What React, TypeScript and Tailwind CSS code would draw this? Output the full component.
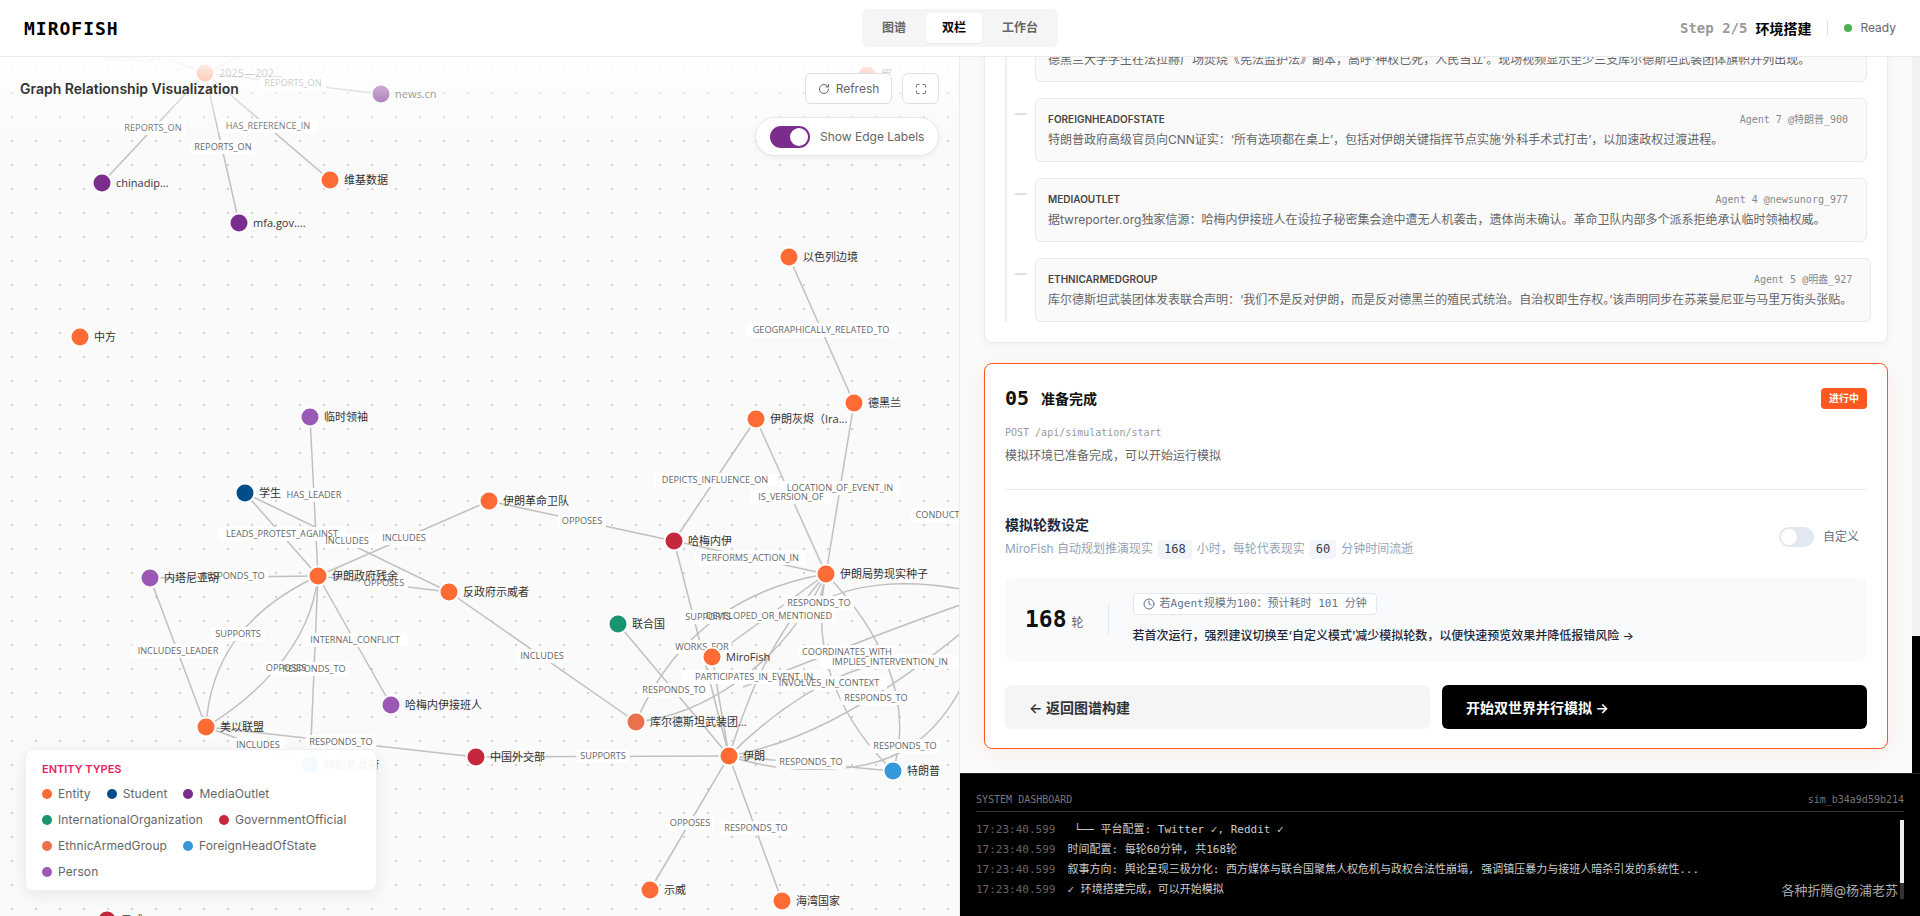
import { Clock, Maximize, RotateCw } from "lucide-react";

const mono = "font-['DejaVu_Sans_Mono','Noto_Sans_CJK_SC',monospace]";
const sans = "font-['Inter','Noto_Sans_CJK_SC',sans-serif]";
const graphFont = "font-['Open_Sans','Noto_Sans_CJK_SC',sans-serif]";

const colors = {
  entity: "#FF6B35",
  student: "#004E89",
  media: "#7B2D8E",
  org: "#1A936F",
  gov: "#C5283D",
  armed: "#E9724C",
  foreign: "#3498DB",
  person: "#9B59B6",
};

const nodes: [number, number, string, string][] = [
  [205, 73, "2025—202...", colors.entity],
  [381, 94, "news.cn", colors.media],
  [867, 75, "罗", colors.entity],
  [102, 183, "chinadip...", colors.media],
  [330, 180, "维基数据", colors.entity],
  [239, 223, "mfa.gov....", colors.media],
  [789, 257, "以色列边境", colors.entity],
  [80, 337, "中方", colors.entity],
  [854, 403, "德黑兰", colors.entity],
  [756, 419, "伊朗灰烬（Ira...", colors.entity],
  [310, 417, "临时领袖", colors.person],
  [245, 493, "学生", colors.student],
  [489, 501, "伊朗革命卫队", colors.entity],
  [674, 541, "哈梅内伊", colors.gov],
  [318, 576, "伊朗政府残余", colors.entity],
  [150, 578, "内塔尼亚胡", colors.person],
  [449, 592, "反政府示威者", colors.entity],
  [826, 574, "伊朗局势现实种子", colors.entity],
  [618, 624, "联合国", colors.org],
  [712, 657, "MiroFish", colors.entity],
  [391, 705, "哈梅内伊接班人", colors.person],
  [636, 722, "库尔德斯坦武装团...", colors.armed],
  [206, 727, "美以联盟", colors.entity],
  [476, 757, "中国外交部", colors.gov],
  [729, 756, "伊朗", colors.entity],
  [893, 771, "特朗普", colors.foreign],
  [310, 765, "特朗普政府", colors.foreign],
  [650, 890, "示威", colors.entity],
  [782, 901, "海湾国家", colors.entity],
  [107, 920, "示威", colors.gov],
];

// straight links and the bent ones between the same nodes
const links = [
  "M205 73L160 56",
  "M205 73L240 56",
  "M205 73L102 183",
  "M205 73L239 223",
  "M205 73L330 180",
  "M205 73L381 94",
  "M789 257L854 403",
  "M756 419L674 541",
  "M756 419L826 574",
  "M854 403L826 574",
  "M310 417L318 576",
  "M245 493L318 576",
  "M245 493L449 592",
  "M489 501L318 576",
  "M489 501L674 541",
  "M674 541L826 574",
  "M150 578L318 576",
  "M318 576L449 592",
  "M150 578L206 727",
  "M206 727C210 660 245 610 318 576",
  "M206 727C250 700 310 650 318 576",
  "M318 576L310 765",
  "M318 576L391 705",
  "M206 727L476 757",
  "M206 727L310 765",
  "M476 757L729 756",
  "M449 592L636 722",
  "M618 624L729 756",
  "M674 541L729 756",
  "M712 657L729 756",
  "M712 657L826 574",
  "M826 574C760 585 680 620 636 722",
  "M636 722C700 715 780 670 826 574",
  "M729 756C750 690 770 640 826 574",
  "M826 574C812 640 830 710 893 771",
  "M826 574C880 630 915 700 893 771",
  "M826 574L819 603",
  "M819 603C850 585 900 578 960 589",
  "M743 687C790 670 860 640 960 605",
  "M729 756C770 715 830 670 890 662",
  "M729 756C790 745 860 715 960 634",
  "M729 756C770 770 810 772 853 767",
  "M853 767C890 762 930 745 960 690",
  "M729 756L893 771",
  "M729 756L650 890",
  "M729 756L782 901",
];

const edgeLabels: [string, number, number][] = [
  ["REPORTS_ON", 132, 58],
  ["REPORTS_ON", 293, 83],
  ["REPORTS_ON", 153, 128],
  ["HAS_REFERENCE_IN", 268, 126],
  ["REPORTS_ON", 223, 147],
  ["GEOGRAPHICALLY_RELATED_TO", 821, 330],
  ["DEPICTS_INFLUENCE_ON", 715, 480],
  ["LOCATION_OF_EVENT_IN", 840, 488],
  ["IS_VERSION_OF", 791, 497],
  ["CONDUCTED_STRIKE_ON", 969, 515],
  ["HAS_LEADER", 314, 495],
  ["LEADS_PROTEST_AGAINST", 282, 534],
  ["INCLUDES", 347, 541],
  ["INCLUDES", 404, 538],
  ["OPPOSES", 582, 521],
  ["PERFORMS_ACTION_IN", 750, 558],
  ["RESPONDS_TO", 233, 576],
  ["OPPOSES", 384, 583],
  ["RESPONDS_TO", 819, 603],
  ["SUPPORTS", 708, 617],
  ["DEVELOPED_OR_MENTIONED", 769, 616],
  ["SUPPORTS", 238, 634],
  ["INTERNAL_CONFLICT", 355, 640],
  ["WORKS_FOR", 702, 647],
  ["INCLUDES_LEADER", 178, 651],
  ["COORDINATES_WITH", 847, 652],
  ["IMPLIES_INTERVENTION_IN", 890, 662],
  ["INCLUDES", 542, 656],
  ["OPPOSES", 286, 668],
  ["RESPONDS_TO", 314, 669],
  ["PARTICIPATES_IN_EVENT_IN", 754, 677],
  ["INVOLVES_IN_CONTEXT", 829, 683],
  ["RESPONDS_TO", 674, 690],
  ["RESPONDS_TO", 876, 698],
  ["RESPONDS_TO", 341, 742],
  ["INCLUDES", 258, 745],
  ["RESPONDS_TO", 905, 746],
  ["SUPPORTS", 603, 756],
  ["RESPONDS_TO", 811, 762],
  ["OPPOSES", 690, 823],
  ["RESPONDS_TO", 756, 828],
];

const legend = [
  ["Entity", colors.entity],
  ["Student", colors.student],
  ["MediaOutlet", colors.media],
  ["InternationalOrganization", colors.org],
  ["GovernmentOfficial", colors.gov],
  ["EthnicArmedGroup", colors.armed],
  ["ForeignHeadOfState", colors.foreign],
  ["Person", colors.person],
];

const entries = [
  {
    type: "STUDENT",
    agent: "Agent 2 @学生_412",
    text: "德黑兰大学学生在法拉赫广场焚烧《宪法监护法》副本，高呼‘神权已死，人民当立’。现场视频显示至少三支库尔德斯坦武装团体旗帜并列出现。",
  },
  {
    type: "FOREIGNHEADOFSTATE",
    agent: "Agent 7 @特朗普_900",
    text: "特朗普政府高级官员向CNN证实：‘所有选项都在桌上’，包括对伊朗关键指挥节点实施‘外科手术式打击’，以加速政权过渡进程。",
  },
  {
    type: "MEDIAOUTLET",
    agent: "Agent 4 @newsunorg_977",
    text: "据twreporter.org独家信源：哈梅内伊接班人在设拉子秘密集会途中遭无人机袭击，遗体尚未确认。革命卫队内部多个派系拒绝承认临时领袖权威。",
  },
  {
    type: "ETHNICARMEDGROUP",
    agent: "Agent 5 @明盎_927",
    text: "库尔德斯坦武装团体发表联合声明：‘我们不是反对伊朗，而是反对德黑兰的殖民式统治。自治权即生存权。’该声明同步在苏莱曼尼亚与马里万街头张贴。",
  },
];

const logs = [
  "\u00a0└── 平台配置: Twitter ✓, Reddit ✓",
  "时间配置: 每轮60分钟, 共168轮",
  "叙事方向: 舆论呈现三极分化: 西方媒体与联合国聚焦人权危机与政权合法性崩塌, 强调镇压暴力与接班人暗杀引发的系统性...",
  "✓ 环境搭建完成，可以开始模拟",
];

function Graph() {
  return (
    <svg viewBox="0 57 959 859" className={`absolute inset-0 w-[959px] h-[859px] ${graphFont}`}>
      {links.map((d) => (
        <path key={d} d={d} fill="none" stroke="#c0c0c0" strokeWidth="1.5" />
      ))}
      {edgeLabels.map(([text, x, y]) => {
        const w = text.length * 5.7 + 8;
        return <rect key={text + x} x={x - w / 2} y={y - 7} width={w} height={14} rx="3" fill="#ffffff" fillOpacity="0.95" />;
      })}
      {edgeLabels.map(([text, x, y]) => (
        <text key={text + x} x={x} y={y + 3} textAnchor="middle" fontSize="9.2" fill="#666666">
          {text}
        </text>
      ))}
      {nodes.map(([x, y, label, color]) => (
        <g key={label + x}>
          <circle cx={x} cy={y} r="9.5" fill={color} stroke="#ffffff" strokeWidth="2" />
          <text x={x + 14} y={y + 4} fontSize="11" fill="#333333">
            {label}
          </text>
        </g>
      ))}
    </svg>
  );
}

function GraphPanel() {
  return (
    <div className="relative w-[960px] h-full overflow-hidden border-r border-[#eaeaea] bg-[#fafafa] bg-[radial-gradient(#d0d0d0_1.5px,transparent_1.5px)] bg-[size:24px_24px]">
      <Graph />

      {/* Header over the graph */}
      <div className="absolute top-0 left-0 right-0 h-20 px-5 pt-4 flex items-start justify-between bg-gradient-to-b from-white/95 to-white/0">
        <div className="text-[14px] leading-[32px] font-semibold text-[#333]">Graph Relationship Visualization</div>
        <div className="flex gap-2.5">
          <button className="h-[31px] w-[87px] flex items-center justify-center gap-1.5 bg-white border border-[#e0e0e0] rounded-md text-[12px] text-[#666]">
            <RotateCw size={12} />
            Refresh
          </button>
          <button className="h-[31px] w-[37px] flex items-center justify-center bg-white border border-[#e0e0e0] rounded-md text-[#666]">
            <Maximize size={12} />
          </button>
        </div>
      </div>

      <div className="absolute top-[60px] right-5 h-[39px] w-[184px] pl-3.5 flex items-center gap-2.5 bg-white border border-[#e8e8e8] rounded-[20px] shadow-[0_2px_6px_rgba(0,0,0,0.05)]">
        <div className="w-10 h-[22px] p-0.5 flex justify-end rounded-full bg-[#7B2D8E]">
          <div className="w-[18px] h-[18px] rounded-full bg-white" />
        </div>
        <span className="text-[12px] text-[#666] whitespace-nowrap">Show Edge Labels</span>
      </div>

      {/* Legend */}
      <div className="absolute top-[692px] left-[25px] w-[352px] h-[142px] px-4 pt-3 rounded-lg bg-white/95 border border-[#f0f0f0] shadow-[0_4px_16px_rgba(0,0,0,0.08)]">
        <div className="text-[11px] leading-[14px] font-semibold text-[#E91E63] mb-[9px]">ENTITY TYPES</div>
        <div className="flex flex-wrap gap-x-4 gap-y-[8px]">
          {legend.map(([name, color]) => (
            <div key={name} className="flex items-center gap-1.5 h-[18px] text-[12px] tracking-[0.1px] text-[#666]">
              <span className="w-2.5 h-2.5 rounded-full" style={{ backgroundColor: color }} />
              {name}
            </div>
          ))}
        </div>
      </div>
    </div>
  );
}

function Timeline() {
  return (
    <div className="-mt-[60px] p-5 bg-white border border-[#eaeaea] rounded-lg shadow-[0_2px_8px_rgba(0,0,0,0.04)]">
      <div className="flex flex-col gap-4 border-l-2 border-[#eeeeee] pl-2">
        {entries.map((e) => (
          <div key={e.type} className="flex gap-2">
            <div className="w-3 h-0.5 mt-[15px] bg-[#e0e0e0] shrink-0" />
            <div className="flex-1 h-16 pl-3 pr-[18px] pt-[12px] bg-[#fafafa] border border-[#eaeaea] rounded-md">
              <div className="flex items-center justify-between h-4">
                <span className="text-[10px] font-semibold text-[#444]">{e.type}</span>
                <span className={`text-[10px] text-[#888] ${mono}`}>{e.agent}</span>
              </div>
              <p className="mt-[4px] text-[12px] leading-[18px] text-[#666] whitespace-nowrap">{e.text}</p>
            </div>
          </div>
        ))}
      </div>
    </div>
  );
}

function PrepareCard() {
  return (
    <div className="mt-5 px-5 pt-5 pb-[19px] bg-white border border-[#ff5722] rounded-lg shadow-[0_4px_20px_rgba(255,87,34,0.08)]">
      <div className="h-7 flex items-center justify-between">
        <div className="flex items-center gap-3">
          <span className={`text-[20px] font-semibold text-[#111] ${mono}`}>05</span>
          <span className="text-[14px] font-semibold text-[#111]">准备完成</span>
        </div>
        <span className="h-[21px] px-2 flex items-center rounded bg-[#ff5722] text-[10px] font-semibold text-white">进行中</span>
      </div>
      <div className={`mt-[13px] text-[10px] leading-[15px] text-[#999] ${mono}`}>POST /api/simulation/start</div>
      <div className="mt-[7px] text-[12px] leading-[18px] text-[#666]">模拟环境已准备完成，可以开始运行模拟</div>
      <div className="mt-6 h-px bg-[#eaeaea]" />

      <div className="mt-[25px] flex items-center justify-between">
        <div>
          <div className="text-[14px] leading-5 font-semibold text-[#1e293b]">模拟轮数设定</div>
          <div className="mt-1 h-5 flex items-center text-[12px] text-[#94a3b8]">
            MiroFish 自动规划推演现实
            <span className={`mx-[5px] px-1.5 h-[19px] leading-[19px] rounded bg-[#f1f5f9] text-[#334155] ${mono}`}>168</span>
            小时，每轮代表现实
            <span className={`mx-[5px] px-1.5 h-[19px] leading-[19px] rounded bg-[#f1f5f9] text-[#334155] ${mono}`}>60</span>
            分钟时间流逝
          </div>
        </div>
        <div className="flex items-center gap-[9px] mr-2">
          <div className="w-[35px] h-5 p-0.5 rounded-full bg-[#e2e8f0]">
            <div className="w-4 h-4 rounded-full bg-white" />
          </div>
          <span className="text-[12px] text-[#64748b]">自定义</span>
        </div>
      </div>

      <div className="mt-[18px] h-[84px] px-5 flex items-center rounded-lg bg-[#f8fafc]">
        <div className="flex items-baseline gap-[5px]">
          <span className={`text-[23px] font-semibold text-[#111] ${mono}`}>168</span>
          <span className="text-[12px] text-[#666]">轮</span>
        </div>
        <div className="w-px h-[31px] mx-6 bg-[#e2e8f0]" />
        <div>
          <div className={`w-fit h-[22px] px-[9px] flex items-center gap-[5px] rounded bg-white border border-[#e2e8f0] text-[11px] text-[#64748b] ${mono}`}>
            <Clock size={12} />
            若Agent规模为100：预计耗时 101 分钟
          </div>
          <div className="mt-3 text-[12px] leading-[18px] font-medium text-[#1e293b]">
            若首次运行，强烈建议切换至‘自定义模式’减少模拟轮数，以便快速预览效果并降低报错风险 →
          </div>
        </div>
      </div>

      <div className="mt-6 grid grid-cols-2 gap-3">
        <button className="h-11 px-6 text-left rounded-md bg-[#f5f5f5] text-[14px] font-semibold text-[#333]">← 返回图谱构建</button>
        <button className="h-11 px-6 text-left rounded-md bg-black text-[14px] font-semibold text-white">开始双世界并行模拟 →</button>
      </div>
    </div>
  );
}

function LogPanel() {
  return (
    <div className={`relative h-[143px] px-4 pt-4 bg-black border-t border-[#222] ${mono}`}>
      <div className="flex items-center justify-between h-[14px] mt-0.5 text-[10px] text-[#777]">
        <span>SYSTEM DASHBOARD</span>
        <span>sim_b34a9d59b214</span>
      </div>
      <div className="mt-[5px] h-px bg-[#333]" />
      <div className="mt-[8px]">
        {logs.map((msg) => (
          <div key={msg} className="h-5 flex items-center gap-3 text-[11px] whitespace-nowrap">
            <span className="text-[#666]">17:23:40.599</span>
            <span className="text-[#ccc]">{msg}</span>
          </div>
        ))}
      </div>
      {/* log scrollbar */}
      <div className="absolute top-[46px] right-4 w-1 h-[79px] bg-[#333]">
        <div className="h-[63px] bg-[#eeeeee]" />
      </div>
      <div className={`absolute top-[106px] right-[22px] text-[13px] leading-5 text-[#aaa] ${sans}`}>各种折腾@杨浦老苏</div>
    </div>
  );
}

export default function App() {
  return (
    <div className={`h-[916px] w-[1920px] flex flex-col overflow-hidden bg-white ${sans}`}>
      <header className="h-[57px] shrink-0 relative z-10 flex items-center pl-6 pr-6 bg-white border-b border-[#eaeaea]">
        <div className={`flex-1 text-[18px] font-bold tracking-[1px] text-black ${mono}`}>MIROFISH</div>
        <div className="flex gap-1 p-1 h-[38px] rounded-md bg-[#f5f5f5] text-[12px] font-semibold text-[#666]">
          <div className="w-14 flex items-center justify-center">图谱</div>
          <div className="w-14 flex items-center justify-center rounded bg-white text-black shadow-[0_1px_2px_rgba(0,0,0,0.06)]">双栏</div>
          <div className="w-[68px] flex items-center justify-center">工作台</div>
        </div>
        <div className="flex-1 flex items-center justify-end">
          <span className={`text-[14px] font-bold text-[#999] ${mono}`}>Step 2/5</span>
          <span className="ml-2 text-[14px] font-bold text-black">环境搭建</span>
          <div className="w-px h-[14px] mx-4 bg-[#e0e0e0]" />
          <span className="w-2 h-2 rounded-full bg-[#4CAF50]" />
          <span className="ml-2 text-[12px] text-[#666]">Ready</span>
        </div>
      </header>

      <main className="flex-1 min-h-0 flex">
        <GraphPanel />
        <div className="w-[960px] flex flex-col">
          <div className="h-[716px] flex bg-[#fafafa]">
            <div className="flex-1 min-w-0 px-6 overflow-hidden">
              <Timeline />
              <PrepareCard />
            </div>
            {/* page scrollbar */}
            <div className="w-2 flex flex-col bg-[#f1f1f1]">
              <div className="h-[579px]" />
              <div className="flex-1 bg-black" />
            </div>
          </div>
          <LogPanel />
        </div>
      </main>
    </div>
  );
}
